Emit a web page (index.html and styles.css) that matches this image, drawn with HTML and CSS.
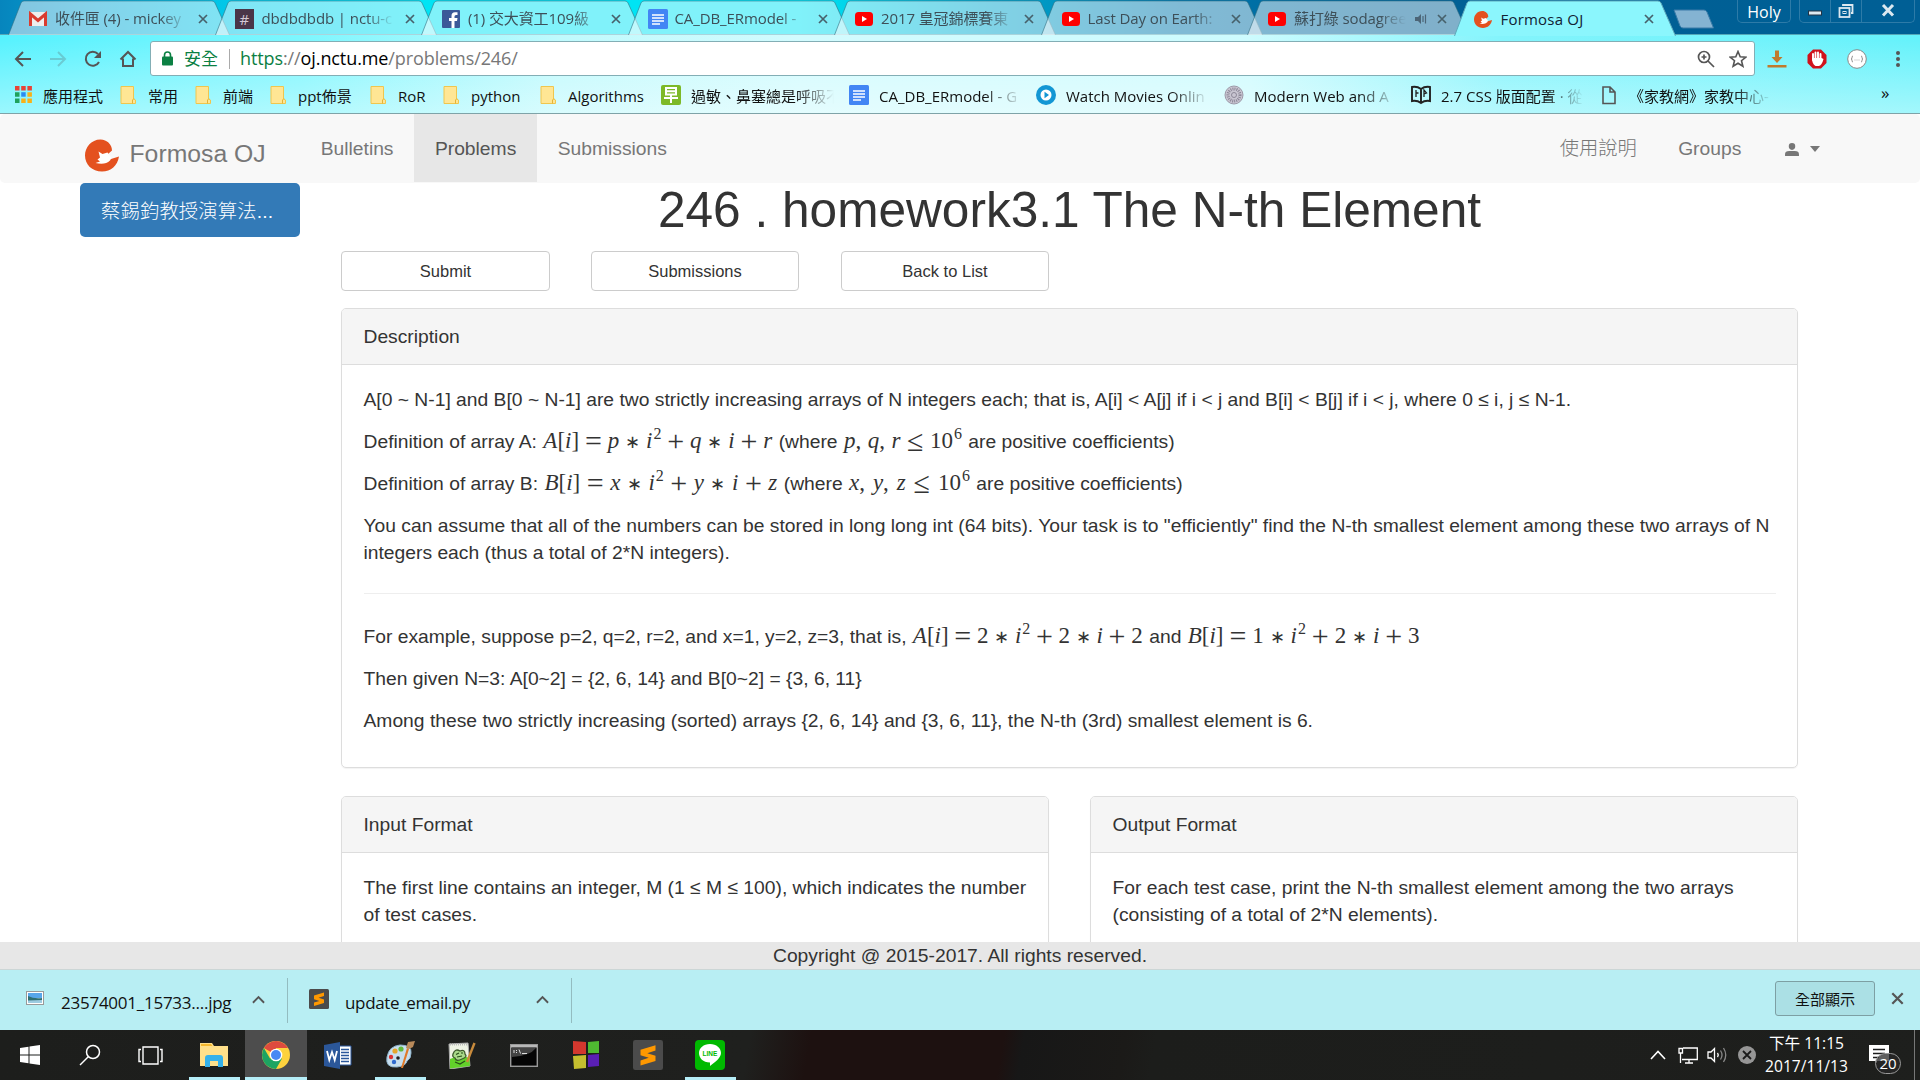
FILE: index.html
```html
<!DOCTYPE html>
<html lang="zh-Hant">
<head>
<meta charset="utf-8">
<title>Formosa OJ</title>
<link rel="stylesheet" href="styles.css">
</head>
<body>
<svg class="defs" width="0" height="0">
  <symbol id="tab-shape" viewBox="0 0 222 36" preserveAspectRatio="none"><path d="M0.5 36 L13 3 Q14 1 16 1 L204 1 Q206 1 207 3 L221.500 36"/></symbol>
  <symbol id="x" viewBox="0 0 10 10"><path d="M1 1 L9 9 M9 1 L1 9" fill="none" stroke="currentColor" stroke-width="1.7"/></symbol>
  <symbol id="yt" viewBox="0 0 20 20"><rect x="1" y="3" width="18" height="14" rx="3.500" fill="#f00"/><path d="M8 7 L13 10 L8 13Z" fill="#fff"/></symbol>
  <symbol id="doc" viewBox="0 0 20 20"><rect width="20" height="20" rx="1.500" fill="#4285f4"/><path d="M4 6H16M4 9H16M4 12H16M4 15H12" stroke="#fff" stroke-width="1.400"/></symbol>
  <symbol id="folder" viewBox="0 0 16 18"><path d="M1 .5H13.500V13L15.500 14V17.500H1Z" fill="#ffe694" stroke="#f0c64e"/><path d="M12.500 17.500V14L14 12.500" fill="none" stroke="#e3b437"/></symbol>
  <symbol id="logo" viewBox="0 0 34 32"><path d="M27 11C27 5 22 0 15.500 0C6 0 0 8 0 16C0 25 7 32 17 32C26 32 32.500 26 34 17L26 19.500L22.500 15Z" fill="#e4511f"/><path d="M13.500 12L17.500 14.500L22.500 13L26.500 18.500L25 21Q20 26 10.500 23.500L15 22L12.500 20L15 18Z" fill="#fff"/></symbol>
  <symbol id="subl" viewBox="0 0 20 20"><rect width="20" height="20" rx="1.500" fill="#4b4b4b"/><path d="M15 3.500V7L9.500 8.800L15 10.500V14L5 17V13.600L10.500 11.900L5 10.200V6.500Z" fill="#ff9800"/></symbol>
  <symbol id="caret-up" viewBox="0 0 14 9"><path d="M1 8L7 2L13 8" fill="none" stroke="currentColor" stroke-width="2"/></symbol>
</svg>

<div class="screen">
<header class="chrome">
  <div class="tabstrip">
    <div class="tabs">
      <div class="tab"><svg class="shape"><use href="#tab-shape"/></svg>
        <svg class="fav" viewBox="0 0 20 20"><rect x="1" y="3" width="18" height="14" rx="1" fill="#eee"/><path d="M2.500 17V5L10 11.500L17.500 5V17" fill="none" stroke="#d93c30" stroke-width="3"/></svg>
        <span class="label">收件匣 (4) - mickey</span><svg class="close"><use href="#x"/></svg></div>
      <div class="tab"><svg class="shape"><use href="#tab-shape"/></svg>
        <span class="fav hash">#</span><span class="label">dbdbdbdb | nctu-c</span><svg class="close"><use href="#x"/></svg></div>
      <div class="tab"><svg class="shape"><use href="#tab-shape"/></svg>
        <svg class="fav" viewBox="0 0 20 20"><rect x="1" y="1" width="18" height="18" rx="1" fill="#3b5998"/><path d="M13.500 19V12H16L16.500 9H13.500V7.500Q13.500 6 15 6H16.500V3.300H14Q10.500 3.300 10.500 7V9H8V12H10.500V19Z" fill="#fff"/></svg>
        <span class="label">(1) 交大資工109級</span><svg class="close"><use href="#x"/></svg></div>
      <div class="tab"><svg class="shape"><use href="#tab-shape"/></svg><svg class="fav"><use href="#doc"/></svg><span class="label">CA_DB_ERmodel -</span><svg class="close"><use href="#x"/></svg></div>
      <div class="tab"><svg class="shape"><use href="#tab-shape"/></svg><svg class="fav"><use href="#yt"/></svg><span class="label">2017 皇冠錦標賽東</span><svg class="close"><use href="#x"/></svg></div>
      <div class="tab"><svg class="shape"><use href="#tab-shape"/></svg><svg class="fav"><use href="#yt"/></svg><span class="label">Last Day on Earth:</span><svg class="close"><use href="#x"/></svg></div>
      <div class="tab"><svg class="shape"><use href="#tab-shape"/></svg><svg class="fav"><use href="#yt"/></svg><span class="label short">蘇打綠 sodagree</span>
        <svg class="audio" viewBox="0 0 13 12"><path d="M0 4H3L6 1V11L3 8H0Z" fill="#4c6577"/><path d="M8 3V9M10.500 1.500V10.500" stroke="#4c6577" stroke-width="1.200"/></svg>
        <svg class="close"><use href="#x"/></svg></div>
      <div class="tab active"><svg class="shape"><use href="#tab-shape"/></svg><svg class="fav logo-fav"><use href="#logo"/></svg><span class="label">Formosa OJ</span><svg class="close"><use href="#x"/></svg></div>
    </div>
    <svg class="newtab" viewBox="0 0 42 20"><path d="M1 1H31Q33 1 34 3L40.500 19H10Q8 19 7 17Z" fill="#84b3d2" stroke="#3a7ba8"/></svg>
    <div class="profile">Holy</div>
    <div class="winctl">
      <span><svg width="14" height="22"><rect x=".5" y="11" width="13" height="4" fill="#dce8f0" stroke="#234"/></svg></span>
      <span><svg width="16" height="22" fill="none" stroke="#dce8f0" stroke-width="1.800"><path d="M5 6V5H14.500V13H13"/><rect x="1.500" y="8" width="10" height="9"/><rect x="5" y="11.500" width="3" height="2" stroke-width="1"/></svg></span>
      <span><svg width="14" height="22"><path d="M2 5L12 15.500M12 5L2 15.500" stroke="#dce8f0" stroke-width="3"/></svg></span>
    </div>
  </div>
  <div class="toolbar">
    <div class="navicons">
      <svg width="18" height="18" viewBox="0 0 18 18" class="ic"><path d="M17 9H2M9 2L2 9L9 16"/></svg>
      <svg width="18" height="18" viewBox="0 0 18 18" class="ic dim"><path d="M1 9H16M9 2L16 9L9 16"/></svg>
      <svg width="18" height="18" viewBox="0 0 18 18" class="ic"><path d="M15 12A7 7 0 1 1 14 4"/><path d="M17 1V8H10Z" fill="#555" stroke="none"/></svg>
      <svg width="18" height="18" viewBox="0 0 18 18" class="ic"><path d="M1.500 9.500L9 2L16.500 9.500M4 8.500V16H14V8.500"/></svg>
    </div>
    <div class="omnibox">
      <svg width="11" height="15" viewBox="0 0 11 15"><rect y="5.500" width="11" height="9" rx="1" fill="#0b8043"/><path d="M2.500 6V4A3 3 0 0 1 8.500 4V6" fill="none" stroke="#0b8043" stroke-width="1.600"/></svg>
      <span class="secure">安全</span>
      <span class="url"><i class="g">https</i>://<b>oj.nctu.me</b>/problems/246/</span>
      <svg class="zoomic" width="18" height="18" viewBox="0 0 18 18" fill="none" stroke="#555" stroke-width="1.700"><circle cx="7" cy="7" r="5.500"/><path d="M11 11L17 17M7 4.500V9.500M4.500 7H9.500"/></svg>
      <svg width="18" height="18" viewBox="0 0 18 18" fill="none" stroke="#555" stroke-width="1.600"><path d="M9 1.500L11.200 6.700L16.800 7.100L12.500 10.700L13.900 16.200L9 13.200L4.100 16.200L5.500 10.700L1.200 7.100L6.800 6.700Z"/></svg>
    </div>
    <div class="exts">
      <svg width="20" height="20" viewBox="0 0 20 20"><path d="M8 1.500H12V8H15.500L10 14L4.500 8H8Z M.5 16H19.500V18.500H.5Z" fill="#c07a2c"/></svg>
      <svg width="20" height="20" viewBox="0 0 20 20"><path d="M6 .5H14L19.500 6V14L14 19.500H6L.5 14V6Z" fill="#d0111b"/><path d="M6 11V5M8.500 10V3.500M11 10V3.500M13.500 11V5" stroke="#fff" stroke-width="1.900" stroke-linecap="round"/><path d="M5 9H14.500L16.500 10Q15 16 12 17H8.500Q5 15 5 9Z" fill="#fff"/></svg>
      <svg width="20" height="20" viewBox="0 0 20 20"><circle cx="10" cy="10" r="9.300" fill="#fff" stroke="#888"/><path d="M6 7Q5 7 5 8.500Q5 10 4 10Q5 10 5 11.500Q5 13 6 13M14 7Q15 7 15 8.500Q15 10 16 10Q15 10 15 11.500Q15 13 14 13" fill="none" stroke="#888"/><path d="M7.500 11H12.500" stroke="#aaa" stroke-dasharray="1 1"/></svg>
      <svg class="menu" width="6" height="18" viewBox="0 0 6 18" fill="#555"><circle cx="3" cy="3" r="2"/><circle cx="3" cy="9" r="2"/><circle cx="3" cy="15" r="2"/></svg>
    </div>
  </div>
  <div class="bookmarks">
    <div class="bm apps"><svg width="17" height="17" viewBox="0 0 17 17"><path d="M0 0h4.500v4.500H0zM6.200 0h4.500v4.500H6.200zM12.400 0h4.500v4.500H12.400z" fill="#e94235"/><path d="M0 6.200h4.500v4.500H0zM0 12.400h4.500v4.500H0z" fill="#1fa15c"/><path d="M6.200 6.200h4.500v4.500H6.200z" fill="#2a8cf0"/><path d="M12.400 6.200h4.500v4.500H12.400zM12.400 12.400h4.500v4.500H12.400zM6.200 12.400h4.500v4.500H6.200z" fill="#f8b118"/></svg><span>應用程式</span></div>
    <div class="bm"><svg class="fo"><use href="#folder"/></svg><span>常用</span></div>
    <div class="bm"><svg class="fo"><use href="#folder"/></svg><span>前端</span></div>
    <div class="bm"><svg class="fo"><use href="#folder"/></svg><span>ppt佈景</span></div>
    <div class="bm"><svg class="fo"><use href="#folder"/></svg><span>RoR</span></div>
    <div class="bm"><svg class="fo"><use href="#folder"/></svg><span>python</span></div>
    <div class="bm"><svg class="fo"><use href="#folder"/></svg><span>Algorithms</span></div>
    <div class="bm wide"><svg class="fi" viewBox="0 0 20 20"><rect width="20" height="20" rx="2" fill="#7db928"/><path d="M5 3H15V9.500H5ZM5 6.200H15M3 13H17M10 9.500V18" fill="none" stroke="#fff" stroke-width="2"/></svg><span>過敏、鼻塞總是呼吸不</span></div>
    <div class="bm wide"><svg class="fi"><use href="#doc"/></svg><span>CA_DB_ERmodel - G</span></div>
    <div class="bm wide"><svg class="fi" viewBox="0 0 20 20"><circle cx="10" cy="10" r="10" fill="#1296d4"/><circle cx="10" cy="10" r="5.500" fill="#fff"/><path d="M8.500 6.800L13 10L8.500 13.200Z" fill="#1296d4"/></svg><span>Watch Movies Onlin</span></div>
    <div class="bm wide"><svg class="fi" viewBox="0 0 20 20"><circle cx="10" cy="10" r="9" fill="#c9c6d2" stroke="#9d99a8"/><circle cx="10" cy="10" r="6" fill="none" stroke="#8d8898" stroke-width="3" stroke-dasharray="1 1"/><circle cx="10" cy="10" r="2.500" fill="none" stroke="#8d8898"/></svg><span>Modern Web and A</span></div>
    <div class="bm wide"><svg class="fi" viewBox="0 0 20 20"><path d="M10 4Q6 1 1 2V16Q6 15 10 18Q14 15 19 16V2Q14 1 10 4ZV18" fill="none" stroke="#222" stroke-width="1.900"/><path d="M5 5V12M5 8H7.500M13 12V5L15.500 8L13 9" fill="none" stroke="#222" stroke-width="1.300"/></svg><span>2.7 CSS 版面配置 · 從</span></div>
    <div class="bm wide"><svg class="fi" viewBox="0 0 20 20"><path d="M4 2H11L16 7V18.500H4ZM11 2V7H16" fill="none" stroke="#555" stroke-width="1.600"/></svg><span>《家教網》家教中心-</span></div>
    <div class="more">»</div>
  </div>
</header>

<div class="page">
  <nav class="navbar">
    <a class="brand"><svg width="34" height="33"><use href="#logo"/></svg><span>Formosa OJ</span></a>
    <a class="link">Bulletins</a><a class="link current">Problems</a><a class="link">Submissions</a>
    <a class="link right-first cjk">使用說明</a><a class="link">Groups</a>
    <a class="link user"><svg width="14" height="13" viewBox="0 0 15 14"><path d="M7.500 0Q11 0 11 3.500Q11 7 7.500 7.500Q4 7 4 3.500Q4 0 7.500 0ZM0 14V12Q0 8.500 4.500 8.500H10.500Q15 8.500 15 12V14Z" fill="#777"/></svg><span class="caret"></span></a>
  </nav>
  <div class="body">
    <aside><a class="group-btn">蔡錫鈞教授演算法...</a></aside>
    <main>
      <h1>246 . homework3.1 The N-th Element</h1>
      <div class="actions"><a>Submit</a><a>Submissions</a><a>Back to List</a></div>
      <section class="panel desc">
        <h2>Description</h2>
        <div class="content">
          <p>A[0 ~ N-1] and B[0 ~ N-1] are two strictly increasing arrays of N integers each; that is, A[i] &lt; A[j] if i &lt; j and B[i] &lt; B[j] if i &lt; j, where 0 ≤ i, j ≤ N-1.</p>
          <p class="m">Definition of array A: <span class="math f1"><span><i>A</i>[<i>i</i>]</span><u>=</u><i>p</i><s>∗</s><span><i>i</i><sup>2</sup></span><u>+</u><i>q</i><s>∗</s><i>i</i><u>+</u><i>r</i></span> (where <span class="math f2"><span><i>p</i>,</span><span><i>q</i>,</span><i>r</i><u>≤</u><span>10<sup>6</sup></span></span> are positive coefficients)</p>
          <p class="m">Definition of array B: <span class="math f3"><span><i>B</i>[<i>i</i>]</span><u>=</u><i>x</i><s>∗</s><span><i>i</i><sup>2</sup></span><u>+</u><i>y</i><s>∗</s><i>i</i><u>+</u><i>z</i></span> (where <span class="math f4"><span><i>x</i>,</span><span><i>y</i>,</span><i>z</i><u>≤</u><span>10<sup>6</sup></span></span> are positive coefficients)</p>
          <p>You can assume that all of the numbers can be stored in long long int (64 bits). Your task is to "efficiently" find the N-th smallest element among these two arrays of N integers each (thus a total of 2*N integers).</p>
          <hr>
          <p class="m">For example, suppose p=2, q=2, r=2, and x=1, y=2, z=3, that is, <span class="math f5"><span><i>A</i>[<i>i</i>]</span><u>=</u><span>2</span><s>∗</s><span><i>i</i><sup>2</sup></span><u>+</u><span>2</span><s>∗</s><i>i</i><u>+</u><span>2</span></span> and <span class="math f6"><span><i>B</i>[<i>i</i>]</span><u>=</u><span>1</span><s>∗</s><span><i>i</i><sup>2</sup></span><u>+</u><span>2</span><s>∗</s><i>i</i><u>+</u><span>3</span></span></p>
          <p>Then given N=3: A[0~2] = {2, 6, 14} and B[0~2] = {3, 6, 11}</p>
          <p>Among these two strictly increasing (sorted) arrays {2, 6, 14} and {3, 6, 11}, the N-th (3rd) smallest element is 6.</p>
        </div>
      </section>
      <div class="formats">
        <section class="panel"><h2>Input Format</h2><div class="content"><p>The first line contains an integer, M (1 ≤ M ≤ 100), which indicates the number of test cases.</p></div></section>
        <section class="panel"><h2>Output Format</h2><div class="content"><p>For each test case, print the N-th smallest element among the two arrays (consisting of a total of 2*N elements).</p></div></section>
      </div>
    </main>
  </div>
</div>
<footer class="copyright">Copyright @ 2015-2017. All rights reserved.</footer>

<div class="downloads">
  <div class="dl">
    <svg class="jpg" width="18" height="14" viewBox="0 0 18 14"><rect x=".5" y=".5" width="17" height="13" fill="#fff" stroke="#999"/><path d="M2 2H16V7H2Z" fill="#58a6ea"/><path d="M2 5Q8 8 16 7V12H2Z" fill="#2f6f72"/><path d="M2 9.500L16 9V12H2Z" fill="#9ccbe0"/></svg>
    <span class="name">23574001_15733....jpg</span><svg class="up"><use href="#caret-up"/></svg>
  </div>
  <div class="dl">
    <svg class="py" width="20" height="20"><use href="#subl"/></svg>
    <span class="name tight">update_email.py</span><svg class="up"><use href="#caret-up"/></svg>
  </div>
  <a class="showall">全部顯示</a>
  <svg class="dlx"><use href="#x"/></svg>
</div>

<div class="taskbar">
  <div class="slot sys"><svg width="20" height="20" viewBox="0 0 20 20" fill="#fff"><path d="M0 3L8.500 1.800V9.500H0ZM9.500 1.600L20 0V9.500H9.500ZM0 10.500H8.500V18.200L0 17ZM9.500 10.500H20V20L9.500 18.400Z"/></svg></div>
  <div class="slot sys"><svg width="22" height="22" viewBox="0 0 22 22" fill="none" stroke="#fff" stroke-width="1.500"><circle cx="14" cy="8" r="6.500"/><path d="M9.500 12.500L1 21"/></svg></div>
  <div class="slot sys"><svg width="25" height="19" viewBox="0 0 25 19" fill="none" stroke="#fff" stroke-width="1.400"><path d="M5 1H20V18H5ZM3 3.500H1V15.500H3M22 3.500H24V15.500H22"/></svg></div>
  <div class="slot run"><svg width="28" height="24" viewBox="0 0 28 24"><path d="M0 0H12L14 3H28V23H0Z" fill="#ffe08a"/><path d="M1 1H11L12.500 3H1Z" fill="#f5b82e"/><path d="M5 24V15Q5 12 8 12H20Q23 12 23 15V24H18V18H10V24Z" fill="#35b1ea"/></svg></div>
  <div class="slot run on"><svg width="28" height="28" viewBox="0 0 28 28"><circle cx="14" cy="14" r="14" fill="#fdd23e"/><path d="M14 14L1.900 7A14 14 0 0 1 26.100 7H14Z" fill="#dd4b3e"/><path d="M1.900 7A14 14 0 0 0 14 28L20 17.500L8 17.500Z" fill="#1da462"/><circle cx="14" cy="14" r="6.300" fill="#fff"/><circle cx="14" cy="14" r="5" fill="#4889f4"/></svg></div>
  <div class="slot"><svg width="28" height="27" viewBox="0 0 28 27"><path d="M15 4H27V23H15Z" fill="#fff" stroke="#2b579a"/><path d="M17 7.500H25M17 10.500H25M17 13.500H25M17 16.500H25M17 19.500H25" stroke="#2b579a" stroke-width="1.300"/><path d="M0 3L16 0V27L0 24Z" fill="#2b579a"/><path d="M3 9L5.300 18L8 10L10.700 18L13 9" fill="none" stroke="#fff" stroke-width="1.800"/></svg></div>
  <div class="slot run"><svg width="30" height="28" viewBox="0 0 30 28"><path d="M2 16Q4 5 15 4Q27 4 26 12Q26 18 22 20Q21 25 12 26Q0 27 2 16Z" fill="#c7dfef" stroke="#8fb4cc"/><circle cx="6" cy="16" r="2.200" fill="#d33"/><circle cx="10" cy="10" r="2.600" fill="#e6a52c"/><circle cx="16" cy="8" r="2.600" fill="#62ba3c"/><circle cx="9" cy="21" r="2.200" fill="#2f6bd0"/><circle cx="13" cy="17" r="1.800" fill="#222"/><path d="M16 27L22 7L24 8L18 27Z" fill="#e07a2a"/><path d="M21 7L23 1L30 0L28 6L24 8Z" fill="#b98a5a"/></svg></div>
  <div class="slot"><svg width="28" height="27" viewBox="0 0 28 27"><path d="M1 2L20 1L22 24L2 27Z" fill="#eef3e4" stroke="#aaa"/><path d="M2 17Q12 12 21.500 16L22 24L2 26.500Z" fill="#62d02a"/><path d="M5 12Q7 6 12 9Q17 7 17 12Q20 15 14 17Q8 20 7 16Q4 15 5 12Z" fill="#a9d98a" stroke="#3d5a2c" stroke-width="1.300"/><path d="M8 12.500L11 11M9 15L14 14M13 11H15M7 20L12 22L17 19" fill="none" stroke="#274d18" stroke-width="1.200"/><path d="M19 20L26.500 1" stroke="#c98b3c" stroke-width="2.400"/><path d="M2 2.500H20" stroke="#bbb" stroke-width="2" stroke-dasharray="1 1"/></svg></div>
  <div class="slot"><svg width="28" height="23" viewBox="0 0 28 23"><rect x=".7" y=".7" width="26.600" height="21.600" fill="#050505" stroke="#999" stroke-width="1.400"/><path d="M1 1H27V3.500H1Z" fill="#b8b8b8"/><path d="M2 4H26Q20 12 2 13Z" fill="#444"/><path d="M4 6V9M6.500 6V7M6.500 8V9M9 5.500L10.500 9.500M12 9.500H17" stroke="#ddd"/></svg></div>
  <div class="slot"><svg width="28" height="30" viewBox="0 0 28 30"><path d="M1 1L14 2V14H1Z" fill="#d3382e"/><path d="M16 2L27 1V13H16Z" fill="#4fba31"/><path d="M1 16L14 15V28L2 29Z" fill="#c5bf2f"/><path d="M16 15L27 14V26L16 27Z" fill="#5a1fb5"/></svg></div>
  <div class="slot"><svg width="30" height="30"><use href="#subl"/></svg></div>
  <div class="slot run"><svg width="30" height="30" viewBox="0 0 30 30"><rect width="30" height="30" rx="4" fill="#00b900"/><path d="M15 4C21.500 4 26 8 26 13C26 18 20 22 15 26V22.500C8 22.500 4 18 4 13C4 8 8.500 4 15 4Z" fill="#fff"/><text x="15" y="16" class="line-t">LINE</text></svg></div>
  <div class="tray">
    <svg width="16" height="10" viewBox="0 0 16 10"><path d="M1 9L8 1.500L15 9" fill="none" stroke="#fff" stroke-width="1.600"/></svg>
    <svg class="t2" width="20" height="17" viewBox="0 0 20 17" fill="none" stroke="#fff" stroke-width="1.300"><path d="M5 1H19.300V12.500H4M11 12.500V16M7 16H15M1 1.500H4.500V6H1ZM2.500 6V16"/></svg>
    <svg class="t3" width="21" height="18" viewBox="0 0 21 18" fill="none" stroke="#fff" stroke-width="1.300"><path d="M1 6H4L7.500 2.500V15.500L4 12H1Z"/><path d="M10.500 7Q12 9 10.500 11"/><path d="M13.500 4.500Q16.500 9 13.500 13.500M16.500 2Q21 9 16.500 16" stroke="#888"/></svg>
    <svg class="t4" width="18" height="18" viewBox="0 0 18 18"><circle cx="9" cy="9" r="9" fill="#969696"/><path d="M5 5L13 13M13 5L5 13" stroke="#1c1c1c" stroke-width="1.800"/></svg>
    <div class="clock">下午 11:15<br>2017/11/13</div>
    <div class="notif"><svg width="20" height="18" viewBox="0 0 20 18"><path d="M0 0H20V16H8V18L6 16H0Z" fill="#fff"/><path d="M4 4.500H16M4 8.500H16M4 12.500H10" stroke="#1c1c1c" stroke-width="1.300"/></svg><span class="badge">20</span></div>
    <i class="edge"></i>
  </div>
</div>
</div>
</body>
</html>
```

FILE: styles.css
```css
* { box-sizing: border-box; }
body { margin: 0; background: #fff; }
i, u, s, b { font-style: normal; font-weight: normal; text-decoration: none; }
.defs { position: absolute; }
svg { flex: none; display: block; }
.screen {
  width: 1920px; height: 1080px; overflow: hidden;
  display: flex; flex-direction: column;
  font-family: "Liberation Sans", "Noto Sans CJK TC", sans-serif;
  font-size: 19.27px; line-height: 27px; color: #333;
}

/* browser frame */
.chrome {
  flex: none; height: 114px; border-bottom: 1px solid #7fa3a8;
  font-family: "Open Sans", "Noto Sans CJK TC", sans-serif; color: #111;
  background:
    linear-gradient(rgba(255,255,255,0) 40px, rgba(255,255,255,.4) 113px),
    linear-gradient(90deg, #58f2fe 0, #7df6fe 300px, #c0fafd 560px, #d2fbfe 800px, #cdfbfe 1250px, #84f4fc 1500px, #66f2fb 1920px);
}
.tabstrip {
  height: 35px; display: flex; padding-left: 8px; border-bottom: 1px solid #55a8b8;
  background: linear-gradient(90deg, #0685bd 0, #06a7d5 100px, #00cdec 250px, #00e4f4 420px, #00e4f4 800px, #00a9cf 980px, #0075ab 1180px, #006095 1440px, #005f95 1920px);
}
.tabs { display: flex; width: 1667px; flex: none; }
.tab {
  position: relative; width: 222px; margin-right: -15.5px; height: 35px; flex: none;
  display: flex; align-items: center; padding: 2px 22px 0 20px; color: #3d4f58;
}
.tab .shape { position: absolute; left: 0; top: 0; width: 222px; height: 35px; fill: rgba(255,255,255,.5); stroke: rgba(50,110,130,.6); }
.tab.active { color: #123; z-index: 2; height: 36px; }
.tab.active .shape { fill: #8bf6fd; height: 36px; stroke: #5fa9bb; }
.fav { width: 20px; height: 20px; position: relative; }
.logo-fav { width: 18px; height: 17px; margin-right: 2px; }
.hash { background: #4a3548; color: #d4c8d4; font-size: 15px; line-height: 20px; text-align: center; }
.label {
  position: relative; margin-left: 7px; width: 133px; font-size: 15px; letter-spacing: -.1px; white-space: nowrap;
  -webkit-mask-image: linear-gradient(90deg, #000 105px, transparent 133px);
}
.label.short { width: 114px; -webkit-mask-image: linear-gradient(90deg, #000 85px, transparent 112px); }
.active .label { -webkit-mask-image: none; letter-spacing: .2px; }
.audio { position: relative; width: 13px; height: 12px; margin: 0 -1px 0 7px; }
.close { position: relative; width: 10px; height: 10px; margin-left: 10.5px; color: #47616b; }
.newtab { width: 42px; height: 20px; margin: 9px 0 0 -2px; }
.profile {
  width: 54px; height: 23px; margin-left: 22px; border: 1px solid #2d7ba8; border-top: 0; border-radius: 0 0 5px 5px;
  color: #fff; font-size: 16px; line-height: 25px; text-align: center;
}
.winctl { display: flex; width: 116px; height: 23px; margin-left: 8px; border: 1px solid #2d7ba8; border-top: 0; border-radius: 0 0 5px 5px; }
.winctl span { display: flex; justify-content: center; flex: 31; border-right: 1px solid #2d7ba8; }
.winctl span:last-child { flex: 54; border: 0; }

.toolbar { height: 42px; display: flex; align-items: center; padding-top: 5px; }
.navicons { display: flex; gap: 17px; width: 150px; padding-left: 14px; }
.ic { fill: none; stroke: #555; stroke-width: 2; }
.dim { opacity: .25; }
.omnibox {
  width: 1605px; height: 35px; background: #fff; border: 1px solid #83aeb5; border-radius: 3px;
  display: flex; align-items: center; padding: 0 7px 0 11px; font-size: 18px;
}
.secure { margin-left: 11px; width: 46px; border-right: 1px solid #aaa; line-height: 20px; color: #0b8043; font-size: 17px; }
.url { margin-left: 10px; color: #777; letter-spacing: -.1px; }
.url .g { color: #0b8043; }
.url b { color: #000; }
.zoomic { margin: 0 14px 0 auto; }
.exts { display: flex; align-items: center; margin-left: 12px; gap: 20px; }
.menu { margin-left: 8px; }

.bookmarks {
  height: 35px; padding-left: 15px; display: grid; align-items: center; font-size: 15px; line-height: 20px;
  grid-template-columns: 105px 75px 75px 100px 73px 97px 121px 188px 187px 188px 187px 188px 282px 20px;
}
.bm { display: flex; align-items: center; white-space: nowrap; }
.bm span { margin-left: 12px; padding-top: 2px; }
.apps span { margin-left: 11px; }
.fo { width: 16px; height: 18px; }
.fi { width: 20px; height: 20px; }
.bm.wide span { margin-left: 10px; width: 143px; -webkit-mask-image: linear-gradient(90deg, #000 105px, transparent 143px); }
.more { font-size: 17px; line-height: 16px; padding-bottom: 4px; }

/* web page */
.page { height: 828px; flex: none; overflow: hidden; }
.navbar { height: 69px; display: flex; background: #f8f8f8; border-radius: 5px; padding-left: 85px; padding-right: 80px; color: #777; }
.brand { width: 215px; display: flex; padding-top: 25px; font-size: 24.75px; }
.brand span { margin-left: 10.5px; padding-top: 1px; }
.link { padding: 20.600px 20.700px; height: 68px; }
.current { background: #e7e7e7; color: #555; }
.right-first { margin-left: auto; }
.cjk { font-weight: 300; }
.user { display: flex; align-items: center; gap: 11px; padding: 22px 20px 20px 23px; }
.caret { border: 5.5px solid transparent; border-top: 6px solid #777; border-bottom: 0; }

.body { display: flex; }
aside { width: 341px; padding-left: 80px; flex: none; }
.group-btn { display: block; width: 220px; height: 54px; border-radius: 5px; background: #337ab7; color: #fff; padding: 15px 0 0 21px; white-space: nowrap; font-weight: 300; letter-spacing: .2px; }
main { width: 1457px; }
h1 { margin: 0; font-size: 49.580px; line-height: 54px; font-weight: normal; text-align: center; }
.actions { display: grid; grid-template-columns: 209px 208px 208px; gap: 41px; margin-top: 14px; }
.actions a { height: 40px; border: 1px solid #ccc; border-radius: 4px; font-size: 16.500px; line-height: 38px; text-align: center; }
.actions a:last-child { margin-left: 1px; margin-right: -1px; }
.panel { border: 1px solid #ddd; border-radius: 5px; box-shadow: 0 1px 1px rgba(0,0,0,.05); }
.desc { margin-top: 17px; height: 460px; }
.panel h2 { margin: 0; font-size: 19.250px; font-weight: normal; line-height: 27px; padding: 14px 21.500px 14px; background: #f5f5f5; border-bottom: 1px solid #ddd; border-radius: 4px 4px 0 0; }
.content { padding: 21px 21.500px 0; }
.content p { margin: 0 0 14.500px; }
.content p.m { height: 28px; line-height: 28px; margin-bottom: 14px; white-space: nowrap; }
hr { border: 0; border-top: 1px solid #eee; margin: 27.500px 0 29px; }
.math { display: inline-flex; justify-content: space-between; align-items: baseline; font-family: "Liberation Serif", serif; font-size: 23px; line-height: 20px; margin: 0 1px; }
.math i { font-style: italic; }
.math u { font-size: 30px; line-height: 10px; transform: translateY(3px); }
.math s { font-size: 18px; line-height: 10px; }
.math sup { font-size: 16px; line-height: 0; vertical-align: 9px; margin-left: 1px; }
.f1 { width: 229px; }
.f2 { width: 118px; }
.f3 { width: 233px; }
.f4 { width: 121px; }
.f5 { width: 230px; }
.f6 { width: 232px; }
.formats { display: grid; grid-template-columns: 708px 708px; gap: 41px; margin-top: 28px; }
.formats .panel { height: 260px; }
.copyright { flex: none; height: 28px; background: #e7e7e7; border-bottom: 1px solid #ccd6d6; text-align: center; line-height: 27px; }

/* download shelf */
.downloads { flex: none; height: 60px; background: #b8eef3; display: flex; align-items: center; font-family: "Open Sans", "Noto Sans CJK TC", sans-serif; color: #111; }
.dl { display: flex; align-items: center; width: 284px; height: 45px; border-right: 1px solid #93bcc0; padding: 0 22px 0 21px; }
.dl:first-child { width: 288px; padding-left: 26px; }
.name { margin-left: 17px; font-size: 17px; letter-spacing: -.25px; padding-top: 5px; }
.tight { margin-left: 16px; letter-spacing: -.35px; }
.up { width: 13px; height: 9px; margin: -2px 0 0 auto; color: #555; }
.jpg { margin-top: -4px; }
.py { margin-top: -3px; }
.showall { margin-left: auto; width: 100px; height: 35px; border: 1px solid #7d9fa3; border-radius: 3px; background: #abe0e5; text-align: center; font-size: 15px; line-height: 34px; margin-top: -3px; }
.dlx { width: 13px; height: 13px; margin: -3px 16px 0 16px; color: #555; }

/* taskbar */
.taskbar {
  flex: none; height: 50px; display: flex;
  background: linear-gradient(100deg, #1d1e1c 0, #1f201e 740px, #1d1110 800px, #1d1110 990px, #171717 1010px, #1b1a18 1110px, #1c1d1b 1140px, #1e1f1d 1920px);
}
.slot { width: 62px; height: 50px; display: flex; align-items: center; justify-content: center; }
.slot.sys { width: 60px; }
.slot:nth-child(3) { width: 63px; padding-right: 3px; }
.slot.run { background: linear-gradient(#b5eef8, #b5eef8) 50% 100% / 51px 3px no-repeat; }
.slot.on { background: linear-gradient(#b5eef8, #b5eef8) 0 100% / 62px 3px no-repeat #4d4d4d; }
.line-t { font: bold 6.500px "Liberation Sans", sans-serif; text-anchor: middle; fill: #00b900; }
.tray { margin-left: auto; display: flex; align-items: center; color: #fff; font-family: "Open Sans", "Noto Sans CJK TC", sans-serif; }
.t2 { margin-left: 12px; }
.t3 { margin-left: 9px; }
.t4 { margin-left: 10px; }
.clock { width: 102px; padding-right: 1px; text-align: center; font-size: 15.600px; line-height: 23px; }
.notif { position: relative; margin-left: 11px; width: 20px; height: 20px; }
.badge { position: absolute; left: 6px; top: 8px; width: 26px; height: 21px; border: 1px solid #999; border-radius: 11px; background: rgba(40,40,40,.75); text-align: center; font-size: 15px; line-height: 19px; }
.edge { width: 6px; height: 50px; border-left: 1px solid #777; margin-left: 25px; }
```
